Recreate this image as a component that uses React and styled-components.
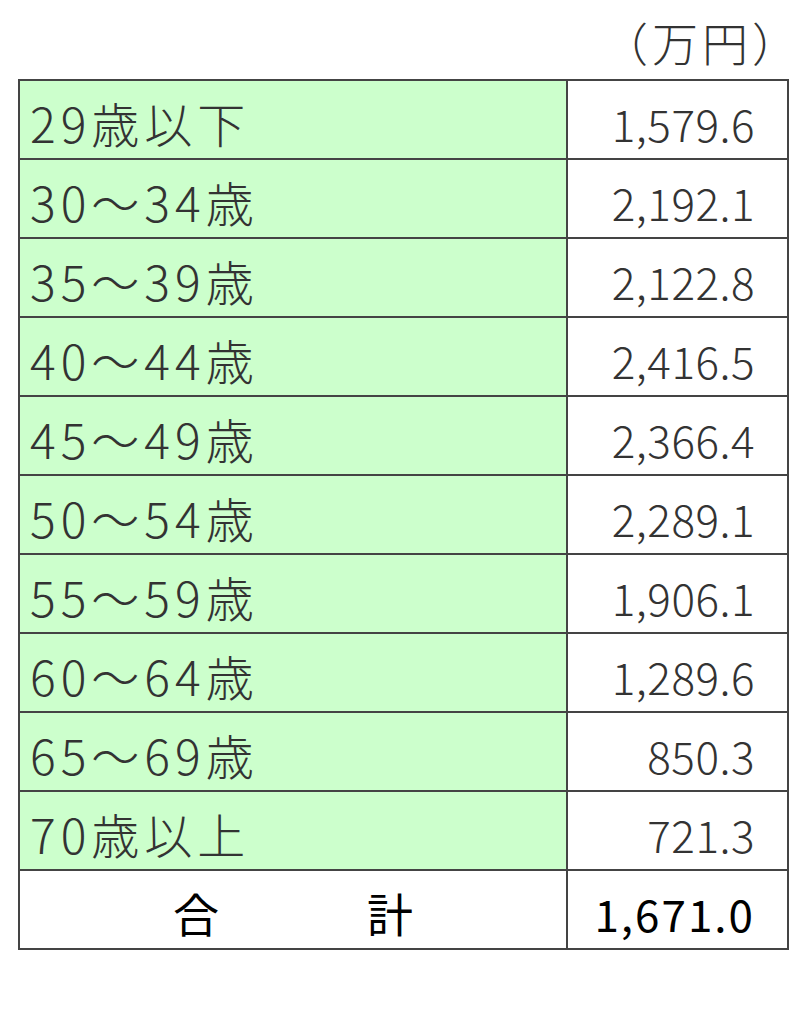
import React from 'react'
import { styled, createGlobalStyle } from "styled-components";

const GlobalStyle = createGlobalStyle`
  html, body {
    margin: 0;
    padding: 0;
    background: #ffffff;
  }
  body {
    font-family: "Noto Sans CJK JP", "Noto Sans", sans-serif;
  }
`;

const rows = [
    { label: "29歳以下", value: "1,579.6" },
    { label: "30～34歳", value: "2,192.1" },
    { label: "35～39歳", value: "2,122.8" },
    { label: "40～44歳", value: "2,416.5" },
    { label: "45～49歳", value: "2,366.4" },
    { label: "50～54歳", value: "2,289.1" },
    { label: "55～59歳", value: "1,906.1" },
    { label: "60～64歳", value: "1,289.6" },
    { label: "65～69歳", value: "850.3" },
    { label: "70歳以上", value: "721.3" },
];

const App = () => {
    return (
        <>
            <GlobalStyle />
            <Wrapper>
                <Unit>（万円）</Unit>
                <Table>
                    <colgroup>
                        <col style={{ width: "548px" }} />
                        <col style={{ width: "221px" }} />
                    </colgroup>
                    <tbody>
                        {rows.map((r) => (
                            <tr key={r.label}>
                                <LabelCell>{r.label}</LabelCell>
                                <ValueCell>{r.value}</ValueCell>
                            </tr>
                        ))}
                        <tr>
                            <TotalLabel>
                                <TotalWords>
                                    <span>合</span>
                                    <span>計</span>
                                </TotalWords>
                            </TotalLabel>
                            <ValueCell $total>1,671.0</ValueCell>
                        </tr>
                    </tbody>
                </Table>
            </Wrapper>
        </>
    )
}

const Wrapper = styled.section`
  width: 800px;
  padding: 11px 0 0 18px;
  box-sizing: border-box;
`;

const Unit = styled.div`
  width: 784px;
  text-align: right;
  font-size: 46px;
  font-weight: 300;
  color: #333;
  letter-spacing: 4px;
  line-height: 60px;
  margin-bottom: 8px;
`;

const Table = styled.table`
  border-collapse: collapse;
  table-layout: fixed;
  width: 769px;
  td {
    border: 2px solid #444;
    height: 79px;
    padding: 0;
    box-sizing: border-box;
  }
`;

const LabelCell = styled.td`
  background: #ccffcc;
  font-size: 48px;
  font-weight: 300;
  color: #333;
  letter-spacing: 5px;
  padding-left: 10px !important;
  padding-top: 5px !important;
  line-height: 1;
`;

const ValueCell = styled.td`
  background: #ffffff;
  text-align: right;
  font-size: 44px;
  font-weight: ${(p) => (p.$total ? 400 : 300)};
  color: ${(p) => (p.$total ? "#000" : "#333")};
  letter-spacing: ${(p) => (p.$total ? "2px" : "0.5px")};
  padding-right: 32px !important;
  padding-top: 6px !important;
  line-height: 1;
`;

const TotalLabel = styled.td`
  background: #ffffff;
`;

const TotalWords = styled.div`
  display: flex;
  justify-content: center;
  gap: 148px;
  font-size: 46px;
  font-weight: 400;
  color: #000;
  padding-top: 4px;
`;

export default App
